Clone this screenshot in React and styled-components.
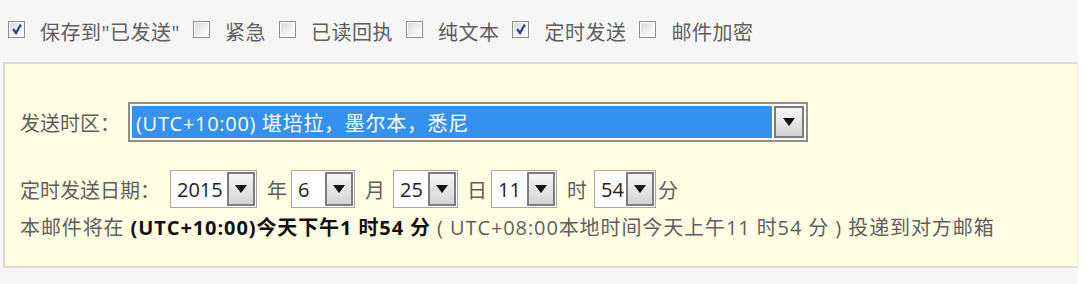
import React from "react";
import styled, { createGlobalStyle } from "styled-components";

const GlobalStyle = createGlobalStyle`
  html, body {
    margin: 0;
    padding: 0;
    background: #ffffff;
    font-family: "Open Sans", "Noto Sans CJK SC", sans-serif;
  }
`;

const Page = styled.div`
  display: flex;
  width: 1087px;
  height: 284px;
  overflow: hidden;
  background: #ffffff;
`;

const Main = styled.div`
  width: 1078px;
  background: #f6f6f6;
`;

const Options = styled.div`
  display: flex;
  align-items: center;
  height: 62px;
  padding-left: 8px;
  color: #5e5e5e;
  font-size: 20px;
  letter-spacing: 0.5px;
`;

const Option = styled.label`
  display: flex;
  align-items: center;
  gap: 15px;
  margin-right: 13px;
`;

const Box = styled.span`
  width: 15px;
  height: 15px;
  margin-top: -4px;
  border: 1px solid #8c8c8c;
  background: linear-gradient(135deg, #d6d6d6 0%, #f4f4f4 65%, #ffffff 100%);
  box-shadow: inset 0 0 0 1px #fff;
  display: flex;
  align-items: center;
  justify-content: center;
`;

const Checkbox = ({ checked }) => (
  <Box>
    {checked && (
      <svg width="12" height="12" viewBox="0 0 12 12">
        <path d="M2.2 6 L5 10 L9.8 1.5" fill="none" stroke="#2c3f8e" strokeWidth="2.2" />
      </svg>
    )}
  </Box>
);

const Panel = styled.div`
  box-sizing: border-box;
  width: 1075px;
  margin-left: 3px;
  background: #fffee3;
  border: 2px solid #dcdcdc;
  border-right: 1px solid #eeeede;
  padding: 38px 0 25px 15px;
`;

const Row = styled.div`
  display: flex;
  align-items: center;
  color: #5e5e5e;
  font-size: 20px;
  margin-bottom: ${({ $gap }) => $gap || 0}px;
`;

const Label = styled.span`
  margin-right: ${({ $mr }) => $mr || 0}px;
`;

const Zone = styled.div`
  display: flex;
  width: 680px;
  height: 40px;
  box-sizing: border-box;
  border: 2px solid #8e8e8e;
  background: #fff;
  padding: 2px;
`;

const ZoneText = styled.div`
  flex: 1;
  background: #3591f0;
  color: #fff;
  display: flex;
  align-items: center;
  padding-left: 4px;
  font-size: 20px;
  letter-spacing: 0.7px;
`;

const Arrow = styled.div`
  width: ${({ $w }) => $w || 26}px;
  margin-left: 2px;
  border: 2px solid #7d7d7d;
  background: linear-gradient(#f6f6f6, #d4d4d4);
  display: flex;
  align-items: center;
  justify-content: center;
  &::after {
    content: "";
    border-left: 6px solid transparent;
    border-right: 6px solid transparent;
    border-top: 8px solid #111;
  }
`;

const Pick = styled.div`
  display: flex;
  width: ${({ $w }) => $w}px;
  height: 38px;
  box-sizing: border-box;
  border: 1px solid #a6a6a6;
  background: #fff;
  padding: 1px;
`;

const PickValue = styled.div`
  flex: 1;
  color: #222;
  font-size: 20px;
  display: flex;
  align-items: center;
  padding-left: 5px;
`;

const Unit = styled.span`
  margin: 0 ${({ $r }) => ($r === undefined ? 4 : $r)}px 0 ${({ $l }) => ($l === undefined ? 10 : $l)}px;
`;

const Info = styled.div`
  color: #5e5e5e;
  font-size: 20px;
  margin-top: 7px;
  line-height: 26px;
  letter-spacing: 0.9px;
  white-space: nowrap;
`;

const Strong = styled.b`
  color: #111;
  font-weight: 700;
`;

const Select = ({ value, width }) => (
  <Pick $w={width}>
    <PickValue>{value}</PickValue>
    <Arrow $w={24} />
  </Pick>
);

const options = [
  ["保存到\"已发送\"", true],
  ["紧急", false],
  ["已读回执", false],
  ["纯文本", false],
  ["定时发送", true],
  ["邮件加密", false],
];

export default function App() {
  return (
    <Page>
      <GlobalStyle />
      <Main>
        <Options>
          {options.map(([text, checked]) => (
            <Option key={text}>
              <Checkbox checked={checked} />
              {text}
            </Option>
          ))}
        </Options>
        <Panel>
          <Row $gap={28}>
            <Label $mr={8}>发送时区：</Label>
            <Zone>
              <ZoneText>(UTC+10:00) 堪培拉，墨尔本，悉尼</ZoneText>
              <Arrow />
            </Zone>
          </Row>
          <Row>
            <Label $mr={10}>定时发送日期：</Label>
            <Select value="2015" width={87} />
            <Unit>年</Unit>
            <Select value="6" width={64} />
            <Unit $r={8}>月</Unit>
            <Select value="25" width={65} />
            <Unit $l={9}>日</Unit>
            <Select value="11" width={66} />
            <Unit $r={7}>时</Unit>
            <Select value="54" width={62} />
            <Unit $l={2} $r={0}>分</Unit>
          </Row>
          <Info>
            本邮件将在 <Strong>(UTC+10:00)今天下午1 时54 分</Strong> ( UTC+08:00本地时间今天上午11 时54 分 ) 投递到对方邮箱
          </Info>
        </Panel>
      </Main>
    </Page>
  );
}
